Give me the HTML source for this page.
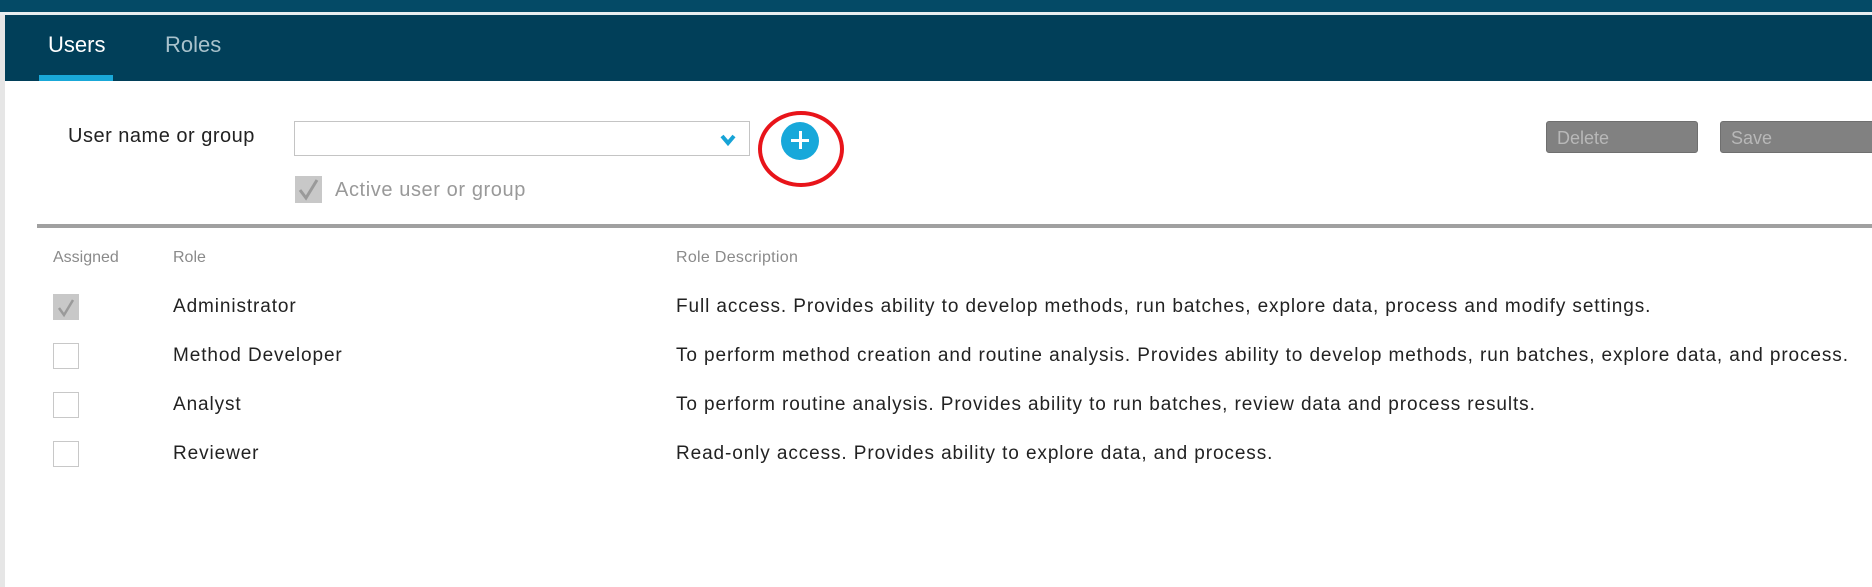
<!DOCTYPE html>
<html><head><style>
body{margin:0;width:1872px;height:587px;background:#fff;font-family:"Liberation Sans",sans-serif;position:relative;overflow:hidden}
div,span{position:absolute}
.t{white-space:nowrap;line-height:1}
.cb{width:26px;height:26px;border:1px solid #c8c8c8;background:#fff;box-sizing:border-box}
.btn{background:#818181;border:1px solid #6f6f6f;border-radius:3px;box-sizing:border-box;color:#b8b8b8;font-size:18px;padding:6px 0 0 10px}
.r{font-size:19px;color:#222;letter-spacing:0.9px}
</style></head><body>
<div style="left:0;top:0;width:1872px;height:12px;background:#044a66"></div>
<div style="left:0;top:12px;width:1872px;height:3px;background:#e8eef0"></div>
<div style="left:5px;top:15px;width:1867px;height:66px;background:#013f59"></div>
<div style="left:0;top:15px;width:5px;height:572px;background:#e6e6e6"></div>
<div class="t" style="left:48px;top:34px;font-size:22px;color:#fff">Users</div>
<div class="t" style="left:165px;top:34px;font-size:22px;color:#a9c2cc">Roles</div>
<div style="left:39px;top:75px;width:74px;height:6px;background:#19a8d8"></div>
<div class="t" style="left:68px;top:126px;font-size:20px;color:#222;letter-spacing:0.5px">User name or group</div>
<div style="left:294px;top:121px;width:456px;height:35px;border:1px solid #c4c4c4;box-sizing:border-box"></div>
<svg style="position:absolute;left:720px;top:133px" width="16" height="14"><path d="M2 3 L8 10 L14 3" stroke="#17a3d6" stroke-width="4" fill="none"/></svg>
<div style="left:781px;top:122px;width:38px;height:38px;border-radius:50%;background:#17a8da"></div>
<div style="left:791px;top:139px;width:18px;height:3px;background:#fff"></div>
<div style="left:799px;top:131px;width:3px;height:18px;background:#fff"></div>
<div style="left:758px;top:111px;width:86px;height:76px;border:4px solid #e8141a;border-radius:50%;box-sizing:border-box"></div>
<div class="btn" style="left:1546px;top:121px;width:152px;height:32px">Delete</div>
<div class="btn" style="left:1720px;top:121px;width:160px;height:32px">Save</div>
<div style="left:295px;top:176px;width:27px;height:27px;background:#c8c8c8"></div>
<svg style="position:absolute;left:295px;top:176px" width="27" height="27"><path d="M5 14 L11 22 L22 4" stroke="#9a9a9a" stroke-width="3" fill="none"/></svg>
<div class="t" style="left:335px;top:180px;font-size:20px;color:#999;letter-spacing:0.6px">Active user or group</div>
<div style="left:37px;top:224px;width:1835px;height:4px;background:#a0a0a0"></div>
<div class="t" style="left:53px;top:250px;font-size:16px;color:#8a8a8a">Assigned</div>
<div class="t" style="left:173px;top:250px;font-size:16px;color:#8a8a8a">Role</div>
<div class="t" style="left:676px;top:250px;font-size:16px;color:#8a8a8a;letter-spacing:0.3px">Role Description</div>

<div style="left:53px;top:294px;width:26px;height:26px;background:#c8c8c8"></div>
<svg style="position:absolute;left:53px;top:294px" width="26" height="26"><path d="M6 14 L11 21 L20 6" stroke="#9a9a9a" stroke-width="2.5" fill="none"/></svg>
<div class="cb" style="left:53px;top:343px"></div>
<div class="cb" style="left:53px;top:392px"></div>
<div class="cb" style="left:53px;top:441px"></div>

<div class="t r" style="left:173px;top:297px">Administrator</div>
<div class="t r" style="left:173px;top:346px">Method Developer</div>
<div class="t r" style="left:173px;top:395px">Analyst</div>
<div class="t r" style="left:173px;top:444px">Reviewer</div>
<div class="t r" style="left:676px;top:297px">Full access. Provides ability to develop methods, run batches, explore data, process and modify settings.</div>
<div class="t r" style="left:676px;top:346px">To perform method creation and routine analysis. Provides ability to develop methods, run batches, explore data, and process.</div>
<div class="t r" style="left:676px;top:395px">To perform routine analysis. Provides ability to run batches, review data and process results.</div>
<div class="t r" style="left:676px;top:444px">Read-only access. Provides ability to explore data, and process.</div>
</body></html>
